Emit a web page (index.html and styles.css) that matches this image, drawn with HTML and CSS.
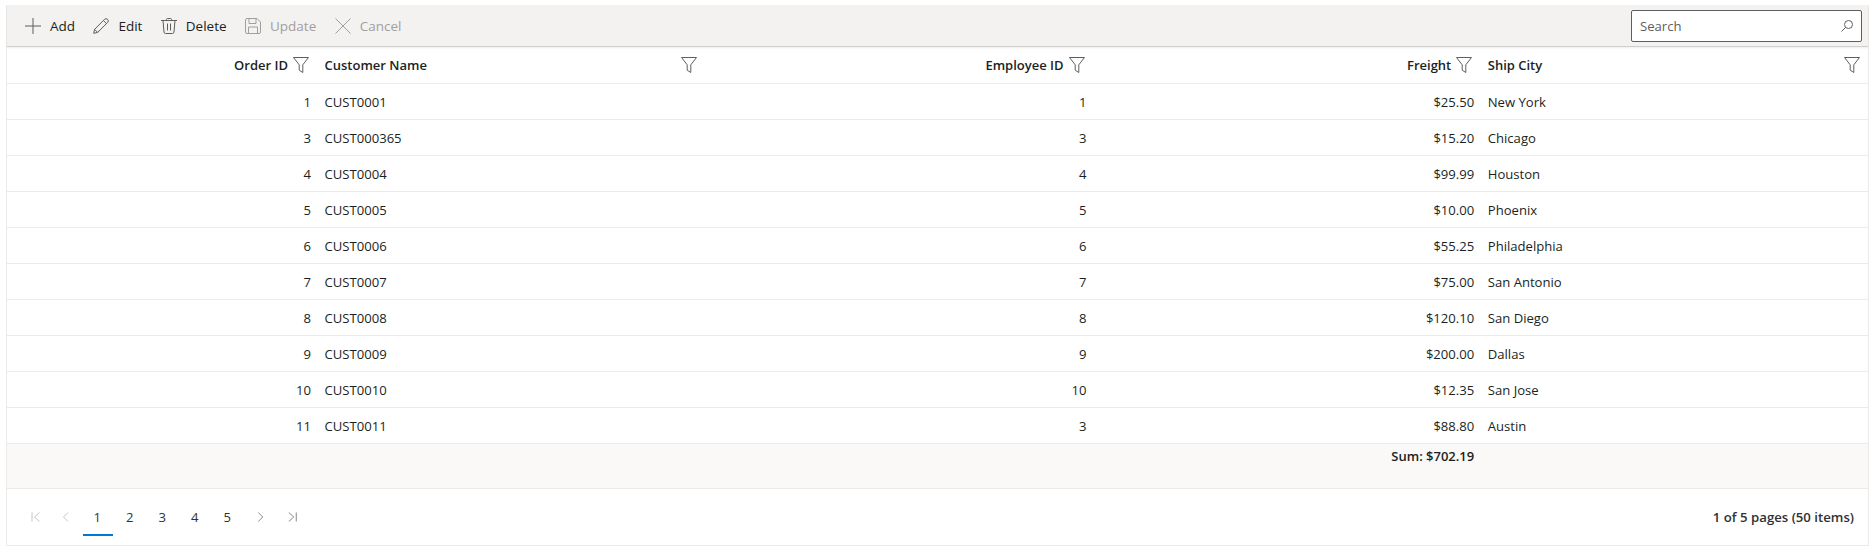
FILE: index.html
```html
<!DOCTYPE html>
<html lang="en">
<head>
<meta charset="utf-8">
<title>Orders grid</title>
<link rel="stylesheet" href="styles.css">
</head>
<body>
<svg class="defs" width="0" height="0" aria-hidden="true">
  <symbol id="filter" viewBox="0 0 16 16"><path d="M0.5 0.5H15.5L9.8 7.8V15.5L6.2 13.2V7.8Z" fill="none" stroke="currentColor" stroke-width="1"/></symbol>
</svg>
<div class="grid">
  <div class="toolbar">
    <button class="tool"><svg class="ticon" viewBox="0 0 16 16"><path d="M0 8H16M8 0V16" fill="none" stroke="#605e5c"/></svg>Add</button>
    <button class="tool"><svg class="ticon" viewBox="0 0 16 16"><path d="M0.7 15.3L1.6 11.3L11.6 1.3Q13 0 14.6 1.3Q16 2.9 14.7 4.4L4.7 14.4ZM1.6 11.3L4.7 14.4M10.4 2.5L13.5 5.6" fill="none" stroke="#605e5c"/></svg>Edit</button>
    <button class="tool"><svg class="ticon" viewBox="0 0 16 16"><path d="M0 2.5H16M5.5 2.5V1.5Q5.5 0.5 6.5 0.5H9.5Q10.5 0.5 10.5 1.5V2.5M2 2.5L3 14Q3.1 15.5 4.5 15.5H11.5Q12.9 15.5 13 14L14 2.5M6.5 5.5V12.5M9.5 5.5V12.5" fill="none" stroke="#605e5c"/></svg>Delete</button>
    <button class="tool off"><svg class="ticon" viewBox="0 0 16 16"><path d="M0.5 2Q0.5 0.5 2 0.5H12L15.5 4V14Q15.5 15.5 14 15.5H2Q0.5 15.5 0.5 14ZM4 0.5V5.5H11V0.5M3.5 15.5V9H12.5V15.5" fill="none" stroke="#a19f9d"/></svg>Update</button>
    <button class="tool off"><svg class="ticon" viewBox="0 0 16 16"><path d="M0.5 0.5L15.5 15.5M15.5 0.5L0.5 15.5" fill="none" stroke="#a19f9d"/></svg>Cancel</button>
    <div class="search">
      <span class="search-text">Search</span>
      <svg class="search-icon" viewBox="0 0 12 12"><circle cx="7.5" cy="4.5" r="4" fill="none" stroke="#605e5c"/><path d="M4.6 7.4L0.5 11.5" fill="none" stroke="#605e5c"/></svg>
    </div>
  </div>
  <div class="row head">
    <div class="cell right"><span>Order ID</span><svg class="filter"><use href="#filter"/></svg></div>
    <div class="cell between"><span>Customer Name</span><svg class="filter"><use href="#filter"/></svg></div>
    <div class="cell right"><span>Employee ID</span><svg class="filter"><use href="#filter"/></svg></div>
    <div class="cell right"><span>Freight</span><svg class="filter"><use href="#filter"/></svg></div>
    <div class="cell between"><span>Ship City</span><svg class="filter"><use href="#filter"/></svg></div>
  </div>
  <div class="row"><div class="cell right">1</div><div class="cell">CUST0001</div><div class="cell right">1</div><div class="cell right">$25.50</div><div class="cell">New York</div></div>
  <div class="row"><div class="cell right">3</div><div class="cell">CUST000365</div><div class="cell right">3</div><div class="cell right">$15.20</div><div class="cell">Chicago</div></div>
  <div class="row"><div class="cell right">4</div><div class="cell">CUST0004</div><div class="cell right">4</div><div class="cell right">$99.99</div><div class="cell">Houston</div></div>
  <div class="row"><div class="cell right">5</div><div class="cell">CUST0005</div><div class="cell right">5</div><div class="cell right">$10.00</div><div class="cell">Phoenix</div></div>
  <div class="row"><div class="cell right">6</div><div class="cell">CUST0006</div><div class="cell right">6</div><div class="cell right">$55.25</div><div class="cell">Philadelphia</div></div>
  <div class="row"><div class="cell right">7</div><div class="cell">CUST0007</div><div class="cell right">7</div><div class="cell right">$75.00</div><div class="cell">San Antonio</div></div>
  <div class="row"><div class="cell right">8</div><div class="cell">CUST0008</div><div class="cell right">8</div><div class="cell right">$120.10</div><div class="cell">San Diego</div></div>
  <div class="row"><div class="cell right">9</div><div class="cell">CUST0009</div><div class="cell right">9</div><div class="cell right">$200.00</div><div class="cell">Dallas</div></div>
  <div class="row"><div class="cell right">10</div><div class="cell">CUST0010</div><div class="cell right">10</div><div class="cell right">$12.35</div><div class="cell">San Jose</div></div>
  <div class="row"><div class="cell right">11</div><div class="cell">CUST0011</div><div class="cell right">3</div><div class="cell right">$88.80</div><div class="cell">Austin</div></div>
  <div class="row summary">
    <div class="cell"></div><div class="cell"></div><div class="cell"></div><div class="cell right">Sum: $702.19</div><div class="cell"></div>
  </div>
  <div class="pager">
    <div class="pages">
      <svg class="nav" viewBox="0 0 10 10"><path d="M1 0.5V9.5M8.5 0.5L3.5 5L8.5 9.5" fill="none" stroke="#c8c6c4"/></svg>
      <svg class="nav" viewBox="0 0 10 10"><path d="M7 0.5L2.5 5L7 9.5" fill="none" stroke="#c8c6c4"/></svg>
      <span class="page current">1</span>
      <span class="page">2</span>
      <span class="page">3</span>
      <span class="page">4</span>
      <span class="page">5</span>
      <svg class="nav next" viewBox="0 0 10 10"><path d="M3 0.5L7.5 5L3 9.5" fill="none" stroke="#8a8886"/></svg>
      <svg class="nav next" viewBox="0 0 10 10"><path d="M9 0.5V9.5M1.5 0.5L6.5 5L1.5 9.5" fill="none" stroke="#8a8886"/></svg>
    </div>
    <div class="info">1 of 5 pages (50 items)</div>
  </div>
</div>
</body>
</html>
```
FILE: styles.css
```css
* { box-sizing: border-box; }
html, body { margin: 0; background: #fff; }
body {
  padding: 5px 6px 0 6px;
  font-family: "Open Sans", "Noto Sans", sans-serif;
  font-size: 13.1px;
  color: #201f1e;
}
.defs { position: absolute; }
.grid {
  width: 1863px;
  height: 541px;
  border-left: 1px solid #edebe9;
  border-right: 1px solid #edebe9;
  border-bottom: 1px solid #edebe9;
}
.toolbar {
  height: 42px;
  display: flex;
  align-items: center;
  padding-left: 18px;
  padding-right: 6px;
  background: #f3f2f1;
  border-bottom: 1px solid #d2d0ce;
  box-shadow: 0 1px 2px rgba(0,0,0,.08);
}
.tool {
  display: flex;
  align-items: center;
  gap: 9px;
  height: 32px;
  margin-right: 18.4px;
  padding: 0;
  border: 0;
  background: none;
  font: inherit;
  font-size: 13.5px;
  color: #201f1e;
}
.tool.off { color: #a19f9d; }
.ticon { width: 16px; height: 16px; }
.search {
  margin-left: auto;
  width: 231px;
  height: 32px;
  display: flex;
  align-items: center;
  justify-content: space-between;
  padding: 0 8px;
  background: #fff;
  border: 1px solid #605e5c;
  border-radius: 2px;
  color: #605e5c;
}
.search-icon { width: 12px; height: 12px; }
.row {
  display: grid;
  grid-template-columns: 310px repeat(4, 1fr);
  height: 36px;
  border-bottom: 1px solid #edebe9;
}
.row:not(.head) .right { padding-right: 6px; }
.head { height: 37px; font-weight: 600; font-size: 13px; }
.cell {
  display: flex;
  align-items: center;
  padding: 0 8px 0 7.5px;
  gap: 5px;
}
.right { justify-content: flex-end; }
.between { justify-content: space-between; }
.filter { width: 16px; height: 16px; color: #605e5c; }
.summary {
  height: 45px;
  background: #faf9f8;
  font-weight: 600;
  font-size: 13px;
}
.summary .cell { align-items: flex-start; padding-top: 3px; }
.pager {
  height: 55px;
  display: flex;
  align-items: center;
  justify-content: space-between;
  padding: 2px 14px 0 14px;
}
.pages { display: flex; align-items: center; }
.nav { width: 30px; height: 10px; margin-bottom: 2px; }
.nav.next { width: 32.5px; }
.page {
  position: relative;
  width: 32.5px;
  height: 36px;
  padding-bottom: 2px;
  display: flex;
  align-items: center;
  justify-content: center;
  color: #323130;
}
.current { font-weight: 500; }
.current::after {
  content: "";
  position: absolute;
  left: 2px;
  right: 0.5px;
  bottom: 0;
  height: 2px;
  background: #0078d4;
}
.info { color: #323130; font-weight: 600; font-size: 13.2px; margin-bottom: 2px; }
```
